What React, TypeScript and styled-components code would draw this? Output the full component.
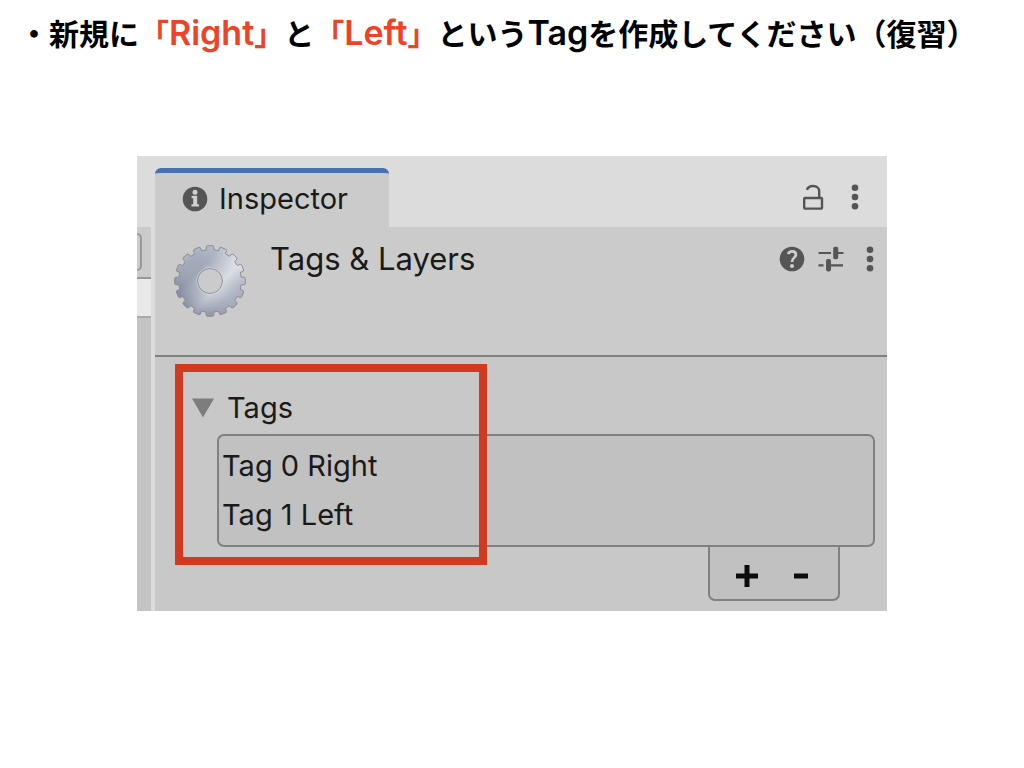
import React from "react";
import styled, { createGlobalStyle } from "styled-components";

const GlobalStyle = createGlobalStyle`
  *, *::before, *::after { box-sizing: border-box; }
  body { margin: 0; background: #ffffff; }
  button { font: inherit; color: inherit; background: none; border: 0; padding: 0; cursor: pointer; }
`;

const Slide = styled.main`
  min-height: 100vh;
  padding: 10px 0 48px;
  background: #ffffff;
`;

const Title = styled.h1`
  margin: 0;
  padding-left: 19px;
  font-family: "Noto Sans CJK JP", sans-serif;
  font-size: 30px;
  line-height: 44px;
  font-weight: 700;
  text-spacing-trim: space-all;
  color: #000000;
`;

const Latin = styled.span`
  font-family: Inter, sans-serif;
  font-size: 34px;
  font-weight: 600;
  line-height: 1;
`;

const Accent = styled.span`
  color: #ee4327;
`;

const Capture = styled.section`
  display: flex;
  min-height: 455px;
  margin: 102px 137px 0;
  overflow: hidden;
  background: #dcdcdc;
  color: #1a1a1a;
  font-family: Inter, sans-serif;
  font-size: 29px;
  line-height: 36px;
`;

const Neighbour = styled.div`
  display: flex;
  flex-direction: column;
  flex: none;
  width: 14px;
  margin-right: 4px;
  padding-top: 71px;
`;

const NeighbourHeader = styled.div`
  height: 50px;
  padding-top: 6px;
  background: #cbcbcb;
`;

const NeighbourField = styled.div`
  width: 5px;
  height: 38px;
  border: 2px solid #999999;
  border-left: 0;
  border-radius: 0 6px 6px 0;
`;

const NeighbourRow = styled.div`
  height: 41px;
  border-top: 2px solid #999999;
  border-bottom: 2px solid #a8a8a8;
  background: #e8e8e8;
`;

const NeighbourBody = styled.div`
  flex: 1;
  background: #c4c4c4;
`;

const Inspector = styled.div`
  display: flex;
  flex-direction: column;
  flex: 1;
  min-width: 0;
`;

const TabBar = styled.div`
  display: flex;
  align-items: flex-end;
  justify-content: space-between;
  height: 71px;
`;

const Tab = styled.button`
  display: flex;
  align-items: center;
  gap: 11px;
  width: 234px;
  height: 59px;
  padding: 0 0 3px 27px;
  border-top: 5px solid #4772b0;
  border-radius: 6px 6px 0 0;
  background: #cbcbcb;
`;

const Tools = styled.div<{ $gap: number; $end: number }>`
  display: flex;
  align-items: center;
  gap: ${(p) => p.$gap}px;
  height: 60px;
  padding-right: ${(p) => p.$end}px;
`;

const ToolPair = styled.div`
  display: flex;
  gap: 13px;
`;

const IconButton = styled.button`
  display: flex;
`;

const Header = styled.header`
  display: flex;
  align-items: flex-start;
  height: 130px;
  padding: 2px 0 0 19px;
  border-bottom: 2px solid #808080;
  background: #cbcbcb;
`;

const GearIcon = styled.svg`
  flex: none;
  margin-top: 16px;
`;

const Heading = styled.h2`
  flex: 1;
  margin: 0 0 0 24px;
  padding-top: 12px;
  font-size: 31px;
  font-weight: 400;
  line-height: 36px;
`;

const Body = styled.div`
  position: relative;
  flex: 1;
  padding: 33px 12px 10px 37px;
  background: #c8c8c8;
`;

const Foldout = styled.button`
  display: flex;
  align-items: center;
  gap: 13px;
  height: 36px;
`;

const TagList = styled.ul`
  height: 113px;
  margin: 8px 0 0 25px;
  padding: 5px 3px;
  border: 2px solid #808080;
  border-radius: 7px;
  background: #c1c1c1;
  list-style: none;
`;

const TagRow = styled.li`
  display: flex;
  align-items: center;
  height: 49px;
`;

const ListFooter = styled.div`
  display: flex;
  justify-content: center;
  gap: 30px;
  width: 132px;
  height: 54px;
  margin: 0 35px 0 auto;
  border: 2px solid #808080;
  border-top: 0;
  border-radius: 0 0 7px 7px;
  background: #c1c1c1;
`;

const FooterButton = styled.button`
  display: flex;
  align-items: center;
  justify-content: center;
  width: 24px;
  height: 58px;
`;

const Highlight = styled.div`
  position: absolute;
  top: 7px;
  left: 20px;
  width: 312px;
  height: 201px;
  border: 8px solid #d23a20;
  pointer-events: none;
`;

const TEETH = 16;

function gearPath(): string {
  const step = (Math.PI * 2) / TEETH;
  const at = (r: number, a: number) =>
    `${(36 + r * Math.sin(a)).toFixed(2)} ${(36 - r * Math.cos(a)).toFixed(2)}`;
  const points: string[] = [];
  for (let i = 0; i < TEETH; i++) {
    const a = i * step;
    points.push(at(31.4, a - 0.12), at(34.6, a - 0.11), at(35.4, a - 0.08));
    points.push(at(35.4, a + 0.08), at(34.6, a + 0.11), at(31.4, a + 0.12));
  }
  return `M${points.join("L")}ZM23.5 36a12.5 12.5 0 1 0 25 0a12.5 12.5 0 1 0 -25 0Z`;
}

const Gear = () => (
  <GearIcon width="72" height="72" viewBox="0 0 72 72" aria-hidden="true">
    <defs>
      <linearGradient id="steel" x1="0.1" y1="0.12" x2="0.9" y2="0.88">
        <stop offset="0" stopColor="#b9bfcb" />
        <stop offset="0.14" stopColor="#a3abba" />
        <stop offset="0.3" stopColor="#a0a8b8" />
        <stop offset="0.5" stopColor="#c6cad4" />
        <stop offset="0.62" stopColor="#dcdfe6" />
        <stop offset="0.8" stopColor="#b4bac7" />
        <stop offset="1" stopColor="#9da5b4" />
      </linearGradient>
      <linearGradient id="shade" x1="0.8" y1="0.1" x2="0.2" y2="0.9">
        <stop offset="0" stopColor="#ffffff" stopOpacity="0.3" />
        <stop offset="0.5" stopColor="#9aa3b5" stopOpacity="0.05" />
        <stop offset="1" stopColor="#4a5671" stopOpacity="0.5" />
      </linearGradient>
    </defs>
    <path d={gearPath()} fill="url(#steel)" fillRule="evenodd" />
    <path d={gearPath()} fill="url(#shade)" fillRule="evenodd" stroke="#85888e" strokeWidth="0.9" />
    <circle cx="36" cy="36" r="13.5" fill="none" stroke="#d8dbe2" strokeOpacity="0.6" />
  </GearIcon>
);

const InfoIcon = () => (
  <svg width="26" height="26" viewBox="0 0 26 26" aria-hidden="true">
    <circle cx="13" cy="13" r="12.3" fill="#555555" />
    <circle cx="13" cy="6.2" r="2.5" fill="#d0d0d0" />
    <path d="M9.6 9.8h5.6v8.4h1.8v2.4H9.4v-2.4h1.8v-5.9H9.6z" fill="#d0d0d0" />
  </svg>
);

const LockIcon = () => (
  <svg width="22" height="26" viewBox="0 0 22 26" fill="none" stroke="#555555" strokeWidth="2.4" aria-hidden="true">
    <rect x="2.2" y="14" width="17.8" height="10.6" rx="0.8" />
    <path d="M5 5.8C5.8 3.2 8 2 11 2c3.6 0 6.2 2 6.2 5.4V14" />
  </svg>
);

const DotsIcon = () => (
  <svg width="8" height="26" viewBox="0 0 8 26" fill="#555555" aria-hidden="true">
    <circle cx="4" cy="3.8" r="3.3" />
    <circle cx="4" cy="13" r="3.3" />
    <circle cx="4" cy="22.2" r="3.3" />
  </svg>
);

const HelpIcon = () => (
  <svg width="26" height="26" viewBox="0 0 26 26" aria-hidden="true">
    <circle cx="13" cy="13" r="12.3" fill="#555555" />
    <path d="M9.2 8.2C9.8 6.2 11.2 5.4 13 5.4c2.3 0 3.9 1.3 3.9 3.3 0 3-3.9 3-3.9 7.2" fill="none" stroke="#cfcfcf" strokeWidth="2.7" />
    <circle cx="13" cy="20" r="2" fill="#cfcfcf" />
  </svg>
);

const PresetIcon = () => (
  <svg width="26" height="26" viewBox="0 0 26 26" aria-hidden="true">
    <path d="M0.5 7h12.5M20 7h5.5M0.5 19.3h5M12 19.3h13" stroke="#555555" strokeWidth="2.2" />
    <rect x="15.2" y="0.8" width="5" height="12.4" rx="1.8" fill="#555555" />
    <rect x="8" y="13" width="5" height="12.4" rx="1.8" fill="#555555" />
  </svg>
);

const PlusIcon = () => (
  <svg width="22" height="22" viewBox="0 0 22 22" aria-hidden="true">
    <path d="M0 11h22M11 0v22" stroke="#0c0c0c" strokeWidth="5" />
  </svg>
);

const MinusIcon = () => (
  <svg width="14" height="22" viewBox="0 0 14 22" aria-hidden="true">
    <path d="M0 11h14" stroke="#0c0c0c" strokeWidth="5" />
  </svg>
);

const TriangleIcon = () => (
  <svg width="22" height="20" viewBox="0 0 22 20" aria-hidden="true">
    <path d="M0 0.5h22L11 19.5z" fill="#7d7d7d" />
  </svg>
);

const tags = ["Right", "Left"];

export default function App() {
  return (
    <>
      <GlobalStyle />
      <Slide>
        <Title lang="ja">
          ・新規に<Accent>「<Latin>Right</Latin>」</Accent>と<Accent>「<Latin>Left</Latin>」</Accent>という<Latin>Tag</Latin>を作成してください（復習）
        </Title>
        <Capture aria-label="Inspector window">
          <Neighbour>
            <NeighbourHeader>
              <NeighbourField />
            </NeighbourHeader>
            <NeighbourRow />
            <NeighbourBody />
          </Neighbour>
          <Inspector>
            <TabBar>
              <Tab type="button">
                <InfoIcon />
                Inspector
              </Tab>
              <Tools $gap={27} $end={28}>
                <IconButton type="button" aria-label="Lock"><LockIcon /></IconButton>
                <IconButton type="button" aria-label="Window menu"><DotsIcon /></IconButton>
              </Tools>
            </TabBar>
            <Header>
              <Gear />
              <Heading>Tags &amp; Layers</Heading>
              <Tools $gap={22} $end={13}>
                <ToolPair>
                  <IconButton type="button" aria-label="Help"><HelpIcon /></IconButton>
                  <IconButton type="button" aria-label="Presets"><PresetIcon /></IconButton>
                </ToolPair>
                <IconButton type="button" aria-label="More"><DotsIcon /></IconButton>
              </Tools>
            </Header>
            <Body>
              <Foldout type="button" aria-expanded="true">
                <TriangleIcon />
                Tags
              </Foldout>
              <TagList>
                {tags.map((name, i) => (
                  <TagRow key={name}>{`Tag ${i} ${name}`}</TagRow>
                ))}
              </TagList>
              <ListFooter>
                <FooterButton type="button" aria-label="Add tag"><PlusIcon /></FooterButton>
                <FooterButton type="button" aria-label="Remove tag"><MinusIcon /></FooterButton>
              </ListFooter>
              <Highlight />
            </Body>
          </Inspector>
        </Capture>
      </Slide>
    </>
  );
}
